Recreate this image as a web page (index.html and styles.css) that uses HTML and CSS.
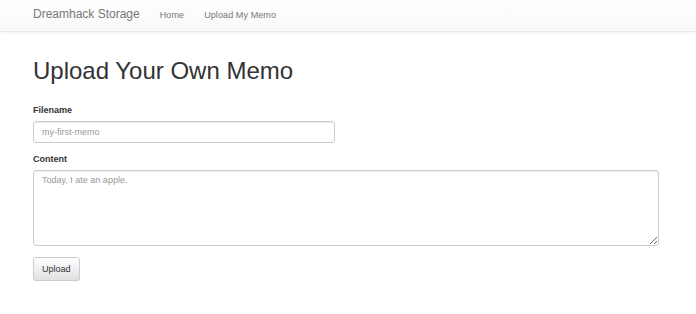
FILE: index.html
```html
<!DOCTYPE html>
<html lang="en">

<head>
    <meta charset="UTF-8">
    <meta name="viewport" content="width=device-width, initial-scale=1.0">
    <title>Dreamhack Storage</title>
    <link rel="stylesheet" href="styles.css">
</head>

<body>
    <nav class="navbar">
        <div class="navbar-inner">
            <a class="navbar-brand" href="#">Dreamhack Storage</a>
            <ul class="nav">
                <li><a href="#">Home</a></li>
                <li><a href="#">Upload My Memo</a></li>
            </ul>
        </div>
    </nav>

    <div class="container">
        <h1>Upload Your Own Memo</h1>
        <form class="memo-form">
            <div class="form-group">
                <label for="filename">Filename</label>
                <input type="text" id="filename" class="form-control input-short" placeholder="my-first-memo">
            </div>
            <div class="form-group">
                <label for="content">Content</label>
                <textarea id="content" class="form-control textarea" placeholder="Today, I ate an apple."></textarea>
            </div>
            <button type="button" class="btn">Upload</button>
        </form>
    </div>
</body>

</html>
```

FILE: styles.css
```css
body {
    margin: 0;
    font-family: "Liberation Sans", Arial, sans-serif;
    font-size: 9px;
    color: #333;
    background: #fff;
}

.navbar {
    height: 31px;
    background-image: linear-gradient(to bottom, #fff 0, #f8f8f8 100%);
    border-bottom: 1px solid #e7e7e7;
    box-shadow: 0 1px 4px rgba(0, 0, 0, 0.06);
}

.navbar-inner {
    display: flex;
    align-items: center;
    height: 31px;
    padding-left: 33px;
}

.navbar-brand {
    font-size: 12px;
    color: #777;
    text-decoration: none;
    margin-top: -3px;
    margin-right: 10px;
}

.nav {
    display: flex;
    list-style: none;
    margin: 0;
    padding: 0;
}

.nav a {
    display: block;
    padding: 0 10px;
    color: #777;
    text-decoration: none;
    font-size: 9px;
    margin-top: -1px;
    letter-spacing: 0.1px;
}

.container {
    padding: 0 33px;
}

h1 {
    margin: 26px 0 0;
    font-size: 24px;
    font-weight: 500;
    line-height: 26px;
    color: #333;
}

.memo-form {
    margin-top: 20px;
}

.form-group {
    margin-bottom: 10px;
}

label {
    display: block;
    font-weight: bold;
    line-height: 13px;
    margin-bottom: 4px;
}

.form-control {
    display: block;
    box-sizing: border-box;
    border: 1px solid #ccc;
    border-radius: 3px;
    box-shadow: inset 0 1px 1px rgba(0, 0, 0, 0.075);
    font-family: inherit;
    font-size: 9px;
    color: #555;
    padding: 4px 8px;
    margin: 0;
}

.form-control::placeholder {
    color: #999;
}

.input-short {
    width: 302px;
    height: 22px;
}

.textarea {
    width: 626px;
    height: 76px;
    resize: vertical;
}

.btn {
    display: block;
    height: 24px;
    padding: 0 8px;
    font-family: inherit;
    font-size: 9px;
    color: #333;
    background-image: linear-gradient(to bottom, #fff 0, #e0e0e0 100%);
    border: 1px solid #ccc;
    border-radius: 3px;
    box-shadow: inset 0 1px 0 rgba(255, 255, 255, 0.15), 0 1px 1px rgba(0, 0, 0, 0.075);
    margin-top: 11px;
}
```
